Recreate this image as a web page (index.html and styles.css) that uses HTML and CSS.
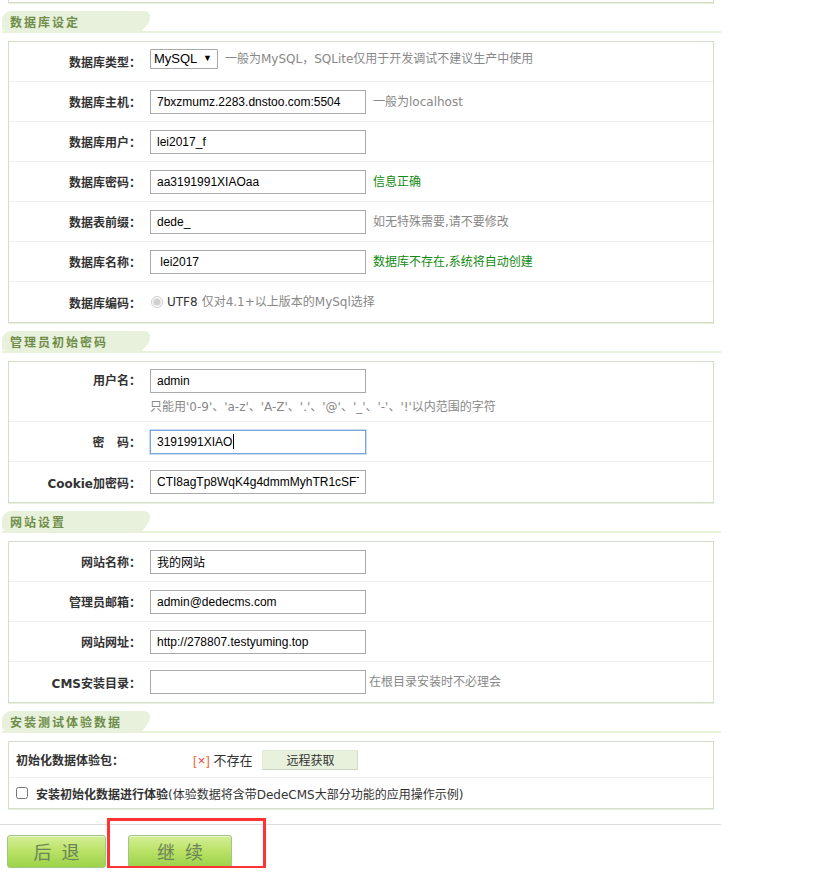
FILE: index.html
```html
<!DOCTYPE html>
<html lang="zh-CN">
<head>
  <meta charset="UTF-8" />
  <title>DedeCMS 安装向导 - 参数配置</title>
  <link rel="stylesheet" href="styles.css">
</head>
<body>

  <div class="install-main">
    <div class="panel panel-tail"></div>

    <!-- 数据库设定 -->
    <div class="panel-title"><span class="tab">数据库设定</span></div>
    <div class="panel">
      <div class="row">
        <span class="label">数据库类型：</span>
        <div class="field field-up">
          <span class="select-wrap">
            <select class="select" name="dbtype">
              <option>MySQL</option>
              <option>SQLite</option>
            </select>
          </span>
          <span class="tip">一般为MySQL，SQLite仅用于开发调试不建议生产中使用</span>
        </div>
      </div>
      <div class="row">
        <span class="label">数据库主机：</span>
        <div class="field">
          <input class="input" type="text" value="7bxzmumz.2283.dnstoo.com:5504">
          <span class="tip">一般为localhost</span>
        </div>
      </div>
      <div class="row">
        <span class="label">数据库用户：</span>
        <div class="field">
          <input class="input" type="text" value="lei2017_f">
        </div>
      </div>
      <div class="row">
        <span class="label">数据库密码：</span>
        <div class="field">
          <input class="input" type="text" value="aa3191991XIAOaa">
          <span class="tip tip-ok">信息正确</span>
        </div>
      </div>
      <div class="row">
        <span class="label">数据表前缀：</span>
        <div class="field">
          <input class="input" type="text" value="dede_">
          <span class="tip">如无特殊需要,请不要修改</span>
        </div>
      </div>
      <div class="row">
        <span class="label">数据库名称：</span>
        <div class="field">
          <input class="input" type="text" value=" lei2017">
          <span class="tip tip-ok">数据库不存在,系统将自动创建</span>
        </div>
      </div>
      <div class="row">
        <span class="label">数据库编码：</span>
        <div class="field field-radio">
          <input class="radio" type="radio" checked disabled>
          <span class="charset">UTF8</span>
          <span class="tip">仅对4.1+以上版本的MySql选择</span>
        </div>
      </div>
    </div>

    <!-- 管理员初始密码 -->
    <div class="panel-title"><span class="tab">管理员初始密码</span></div>
    <div class="panel">
      <div class="row row-tall">
        <span class="label">用户名：</span>
        <div class="field field-stack">
          <input class="input" type="text" value="admin">
          <span class="tip">只能用'0-9'、'a-z'、'A-Z'、'.'、'@'、'_'、'-'、'!'以内范围的字符</span>
        </div>
      </div>
      <div class="row">
        <span class="label">密&nbsp;&nbsp;&nbsp;码：</span>
        <div class="field">
          <span class="input is-focus">3191991XIAO<i class="caret"></i></span>
        </div>
      </div>
      <div class="row">
        <span class="label">Cookie加密码：</span>
        <div class="field">
          <input class="input" type="text" value="CTI8agTp8WqK4g4dmmMyhTR1cSFT">
        </div>
      </div>
    </div>

    <!-- 网站设置 -->
    <div class="panel-title"><span class="tab">网站设置</span></div>
    <div class="panel">
      <div class="row">
        <span class="label">网站名称：</span>
        <div class="field">
          <input class="input" type="text" value="我的网站">
        </div>
      </div>
      <div class="row">
        <span class="label">管理员邮箱：</span>
        <div class="field">
          <input class="input" type="text" value="admin@dedecms.com">
        </div>
      </div>
      <div class="row">
        <span class="label">网站网址：</span>
        <div class="field">
          <input class="input" type="text" value="http://278807.testyuming.top">
        </div>
      </div>
      <div class="row">
        <span class="label">CMS安装目录：</span>
        <div class="field">
          <input class="input" type="text" value="">
          <span class="tip tip-near">在根目录安装时不必理会</span>
        </div>
      </div>
    </div>

    <!-- 安装测试体验数据 -->
    <div class="panel-title"><span class="tab">安装测试体验数据</span></div>
    <div class="panel">
      <div class="row row-pack">
        <span class="pack-label">初始化数据体验包：</span>
        <span class="pack-state"><span class="bracket">[</span><span class="cross">×</span><span class="bracket">]</span> 不存在</span>
        <button class="btn-remote" type="button">远程获取</button>
      </div>
      <div class="row row-check">
        <label class="check-line">
          <input class="checkbox" type="checkbox">
          <strong>安装初始化数据进行体验</strong>(体验数据将含带DedeCMS大部分功能的应用操作示例)
        </label>
      </div>
    </div>

    <div class="actions">
      <button class="btn-step" type="button">后退</button>
      <button class="btn-step btn-next" type="button">继续</button>
    </div>

    <div class="mark"></div>
  </div>

</body>
</html>
```

FILE: styles.css
```css
/* --- 基本设置 --- */
body {
  margin: 0;
  background: #fff;
  font-family: "Liberation Sans", "Noto Sans CJK SC", sans-serif;
  font-size: 12px;
  color: #333;
}

.install-main {
  position: relative;
  width: 719px;
  margin-left: 2px;
}

/* --- 分组标题 (绿色页签) --- */
.panel-title {
  height: 20px;
  margin: 8px 0;
  border-bottom: 2px solid #e8f1dc;
}
.panel-title .tab {
  position: relative;
  z-index: 0;
  display: block;
  width: 124px;
  height: 20px;
  padding-left: 8px;
  box-sizing: border-box;
  background: #e8f1dc;
  border-radius: 9px 0 0 4px;
  color: #6f8d49;
  font: bold 12px/21px "Noto Sans CJK SC", sans-serif;
  letter-spacing: 2px;
}
.panel-title .tab::after {
  content: "";
  position: absolute;
  top: 0;
  left: 100px;
  width: 40px;
  height: 20px;
  background: #e8f1dc;
  border-radius: 0 16px 0 0;
  transform: skewX(-40deg);
  transform-origin: bottom left;
  z-index: -1;
}

/* --- 表单面板 --- */
.panel {
  width: 706px;
  margin-left: 6px;
  box-sizing: border-box;
  border: 1px solid #d3ddc9;
  box-shadow: 0 1px 0 #e8f0de;
}
.panel-tail {
  height: 3px;
  border-top: 0;
}

.row {
  display: flex;
  align-items: center;
  height: 40px;
  box-sizing: border-box;
  border-bottom: 1px solid #eee;
}
.row:last-child {
  border-bottom: 0;
}

.label {
  flex: none;
  width: 141px;
  padding-right: 9px;
  box-sizing: border-box;
  text-align: right;
  font-family: "DejaVu Sans", "Noto Sans CJK SC", sans-serif;
  font-weight: bold;
  color: #333;
}

.field {
  display: flex;
  align-items: center;
  gap: 7px;
}
.field-up {
  margin-top: -6px;
}

.input {
  width: 216px;
  height: 24px;
  margin: 0;
  padding: 0 6px;
  box-sizing: border-box;
  border: 1px solid #a9a9a9;
  font: 12px "Liberation Sans", "Noto Sans CJK SC", sans-serif;
  color: #000;
  outline: none;
}
span.input {
  display: flex;
  align-items: center;
}
.input.is-focus {
  border-color: #7aa6e0;
  box-shadow: 0 0 0 1px #cadcf4;
}
.caret {
  width: 1px;
  height: 15px;
  margin-left: 1px;
  background: #000;
}

.tip {
  color: #888;
  font-family: "DejaVu Sans", "Noto Sans CJK SC", sans-serif;
  font-size: 12px;
  margin-top: -3px;
}
.tip-ok {
  color: #108a10;
}
.tip-near {
  margin-left: -4px;
}

/* 数据库类型下拉 */
.select-wrap {
  position: relative;
  display: inline-block;
}
.select {
  appearance: none;
  -webkit-appearance: none;
  width: 68px;
  height: 20px;
  margin: 0;
  padding: 0 0 0 3px;
  border: 1px solid #a9a9a9;
  border-radius: 1px;
  background: #fff;
  font: 13px "Liberation Sans", sans-serif;
  color: #000;
}
.select-wrap::after {
  content: "▼";
  position: absolute;
  right: 6px;
  top: 4px;
  font-size: 9px;
  color: #000;
  pointer-events: none;
}

/* 编码单选 */
.field-radio {
  gap: 0;
}
.radio {
  width: 12px;
  height: 12px;
  margin: 0 4px 0 1px;
}
.charset {
  color: #333;
  margin-right: 4px;
  font-family: "DejaVu Sans", sans-serif;
}

/* 用户名(带说明) */
.row-tall {
  height: 60px;
  align-items: flex-start;
  padding-top: 7px;
}
.row-tall .label {
  line-height: 24px;
}
.field-stack {
  flex-direction: column;
  align-items: flex-start;
  gap: 4px;
}
.field-stack .tip {
  margin-top: 0;
}

/* --- 体验数据 --- */
.row-pack {
  height: 36px;
  padding-left: 7px;
}
.pack-label {
  width: 177px;
  font-weight: bold;
}
.pack-state {
  color: #333;
  font-size: 13px;
}
.bracket {
  color: #f06a2c;
}
.cross {
  color: #e8364e;
  padding: 0 1px;
}
.btn-remote {
  width: 96px;
  height: 20px;
  margin-left: 10px;
  padding: 0;
  border: 1px solid #e4ecd9;
  border-bottom-color: #c9d3be;
  border-right-color: #d2dbc7;
  background: #e8f1dc;
  font: 12px "Noto Sans CJK SC", sans-serif;
  color: #333;
}

.row-check {
  height: 30px;
  padding-left: 7px;
}
.check-line {
  display: flex;
  align-items: center;
  color: #333;
  font-family: "DejaVu Sans", "Noto Sans CJK SC", sans-serif;
}
.check-line strong {
  font-family: "Noto Sans CJK SC", sans-serif;
}
.checkbox {
  width: 12px;
  height: 12px;
  margin: 0 8px 0 0;
}

/* --- 底部按钮 --- */
.actions {
  display: flex;
  gap: 22px;
  margin: 15px 0 0 -2px;
  padding: 10px 0 0 7px;
  border-top: 1px solid #ddd;
}
.btn-step {
  width: 99px;
  height: 33px;
  padding: 0;
  border: 1px solid #a3c585;
  border-radius: 3px;
  background: linear-gradient(#d3ef97, #bce36a 45%, #a4d752 85%, #9dd24a);
  box-shadow: inset 0 1px 0 rgba(255, 255, 255, 0.5);
  color: #6b8356;
  font: 18px/31px "Noto Sans CJK SC", sans-serif;
  letter-spacing: 10px;
  text-indent: 10px;
}
.btn-next {
  width: 104px;
}

/* 红色标注框 */
.mark {
  position: absolute;
  left: 105px;
  top: 818px;
  width: 159px;
  height: 51px;
  box-sizing: border-box;
  border: 3px solid #f33;
}
```
